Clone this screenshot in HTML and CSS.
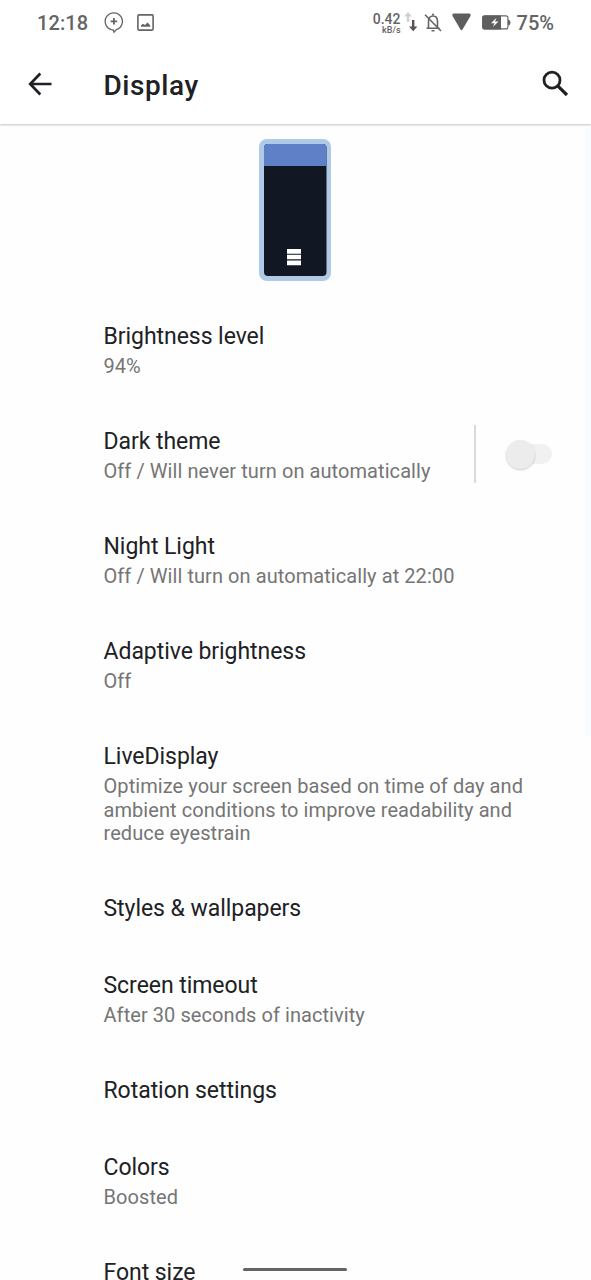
FILE: index.html
```
<!DOCTYPE html>
<html lang="en">
<head>
<meta charset="utf-8">
<title>Display</title>
<link rel="stylesheet" href="styles.css">
</head>
<body>
<div class="screen">
  <header class="header">
    <div class="status">
      <span class="clock">12:18</span>
      <svg class="chat-icon" width="20" height="22" viewBox="0 0 20 22" fill="none" stroke="#646464" stroke-width="1.3"><path d="M7.4 17.7A8.6 8.6 0 1 1 12.2 17.7L10 20.2 9.3 18Z"/><path d="M6.6 9.3h6.6M9.9 6v6.6" stroke-width="1.8"/></svg>
      <svg class="image-icon" width="17" height="17" viewBox="0 0 17 17"><rect x=".9" y=".9" width="15.2" height="15.2" rx="1" fill="none" stroke="#646464" stroke-width="1.6"/><path d="M4 12.8V11.300l2-1.500 2 1.300L10.500 8.600l2.700 2.700v1.500z" fill="#646464"/></svg>
      <div class="status-right">
        <div class="speed"><span class="rate">0.42</span><span class="unit">kB/s</span></div>
        <svg class="arrows" width="14" height="20" viewBox="0 0 14 20"><path d="M4 0L8 4.500H5.200V10H2.800V4.500H0z" fill="#d2d2d2"/><path d="M8 8h2.400v6.500H13.400L9.200 19.200 5 14.500H8z" fill="#555"/></svg>
        <svg class="bell" width="18" height="19" viewBox="0 0 18 19" fill="none" stroke="#646464" stroke-width="1.600"><path d="M4.500 15V8.500C4.500 5.200 6 3 9 3s4.500 2.200 4.500 5.500V15M2.500 15.300h13"/><path d="M1 1.700L17 18"/><path d="M8 1.500h2M7.500 17.700h3"/></svg>
        <svg class="signal" width="19" height="18" viewBox="0 0 19 18"><path d="M2 .5h15c1.700 0 2 1.400 1.300 2.700L10.500 16.500q-1 1.500-2 0L.7 3.200C0 1.900.3.500 2 .5z" fill="#5e5e5e"/></svg>
        <svg class="battery" width="29" height="15" viewBox="0 0 29 15"><rect x=".7" y=".9" width="25.200" height="13" rx="2" fill="#fff" stroke="#646464" stroke-width="1.100"/><path d="M2.500.4H19v14H2.500Q.2 14.400.2 12V2.800Q.2.400 2.500.4z" fill="#5e5e5e"/><path d="M26 4.500q2.500.5 2.500 3t-2.500 3z" fill="#646464"/><path d="M14.500 2.800L9 8.200h3.500L10.800 12l5.700-5.400H13z" fill="#fff"/></svg>
        <span class="percent">75%</span>
      </div>
    </div>
    <div class="toolbar">
      <svg class="back" width="24" height="24" viewBox="0 0 24 24" fill="none" stroke="#202124" stroke-width="2.700"><path d="M12.300 1.500L2.200 12l10.100 10.500M2.200 12H23.500"/></svg>
      <h1 class="heading">Display</h1>
      <svg class="search" width="27" height="27" viewBox="0 0 27 27" fill="none" stroke="#202124"><circle cx="10" cy="10.200" r="8" stroke-width="2.800"/><path d="M15.700 15.900L25 25" stroke-width="3.200"/></svg>
    </div>
  </header>
  <main class="content">
    <div class="preview">
      <svg width="72" height="142" viewBox="0 0 72 142"><rect width="72" height="142" rx="8" fill="#afcae6"/><rect x="5" y="5" width="62.500" height="132" rx="4" fill="#111823"/><path d="M5 27V9q0-4 4-4h54.500q4 0 4 4v18z" fill="#5f80c7"/><path d="M28 110h14v4.800H28zM28 115.800h14v4.500H28zM28 121.500h14v4.800H28z" fill="#fff"/></svg>
    </div>
    <div class="row"><div class="title">Brightness level</div><div class="summary">94%</div></div>
    <div class="row split">
      <div class="label"><div class="title">Dark theme</div><div class="summary">Off / Will never turn on automatically</div></div>
      <div class="divider"></div>
      <div class="switch"><div class="thumb"></div></div>
    </div>
    <div class="row"><div class="title">Night Light</div><div class="summary">Off / Will turn on automatically at 22:00</div></div>
    <div class="row"><div class="title">Adaptive brightness</div><div class="summary">Off</div></div>
    <div class="row"><div class="title">LiveDisplay</div><div class="summary">Optimize your screen based on time of day and<br>ambient conditions to improve readability and<br>reduce eyestrain</div></div>
    <div class="row"><div class="title">Styles &amp; wallpapers</div></div>
    <div class="row"><div class="title">Screen timeout</div><div class="summary">After 30 seconds of inactivity</div></div>
    <div class="row"><div class="title">Rotation settings</div></div>
    <div class="row"><div class="title">Colors</div><div class="summary">Boosted</div></div>
    <div class="row"><div class="title">Font size</div></div>
  </main>
  <div class="edge"></div>
  <div class="nav-handle"></div>
</div>
</body>
</html>
```
FILE: styles.css
```
* { box-sizing: border-box; }
body { margin: 0; font-family: Roboto, sans-serif; background: #fefefe; }
.screen { position: relative; width: 591px; height: 1280px; overflow: hidden; display: flex; flex-direction: column; }
.header { flex: none; height: 124px; background: #fff; box-shadow: 0 1px 2px rgba(0,0,0,.24); }
.status { height: 45px; display: flex; align-items: center; padding-left: 37px; color: #646464; }
.clock { width: 67px; font-size: 20px; font-weight: 500; letter-spacing: .1px; }
.image-icon { margin-left: 13px; }
.status-right { display: flex; align-items: center; margin-left: auto; padding-right: 37px; }
.speed { width: 28px; display: flex; flex-direction: column; align-items: flex-end; font-weight: 500; }
.rate { font-size: 14px; line-height: 14px; }
.unit { font-size: 9px; line-height: 8px; }
.arrows { margin: -2px 0 0 3px; }
.bell { margin-left: 6px; }
.signal { margin: -2px 0 0 10px; }
.battery { margin: -1px 0 0 11px; }
.percent { margin-left: 6px; font-size: 20px; font-weight: 500; }
.toolbar { height: 79px; display: flex; align-items: center; padding: 0 22px 0 28px; }
.back { margin-top: -1px; }
.search { margin-top: -3px; }
.heading { margin: 2px auto 0 51.500px; font-size: 28px; line-height: 34px; font-weight: 500; letter-spacing: .55px; color: #202124; }
.content { flex: 1; display: flex; flex-direction: column; min-height: 0; }
.preview { flex: none; height: 174px; padding: 15px 0 0 259px; }
.row { flex: none; padding: 25px 20px 25px 103.500px; }
.title { font-size: 23px; line-height: 27px; letter-spacing: -.05px; color: #202124; }
.summary { margin: 5px 0 -.600px; font-size: 20px; line-height: 23.600px; letter-spacing: .07px; color: #757575; }
.split { display: flex; align-items: center; height: 105px; padding-right: 39px; }
.label { flex: 1; white-space: nowrap; }
.divider { width: 2px; height: 58px; margin: -3px 36px 0 0; background: #dadada; }
.switch { width: 40px; height: 20px; margin-top: -3px; border-radius: 10px; background: #f1f1f1; }
.thumb { width: 29px; height: 29px; margin: -4px 0 0 -6px; border-radius: 50%; background: #ececec; box-shadow: 0 1px 2px rgba(0,0,0,.2); }
.edge { position: absolute; right: 0; top: 126px; width: 6px; height: 610px; background: #f9fcff; }
.nav-handle { position: absolute; left: 243px; top: 1268px; width: 104px; height: 3px; border-radius: 2px; background: #646464; }
```
